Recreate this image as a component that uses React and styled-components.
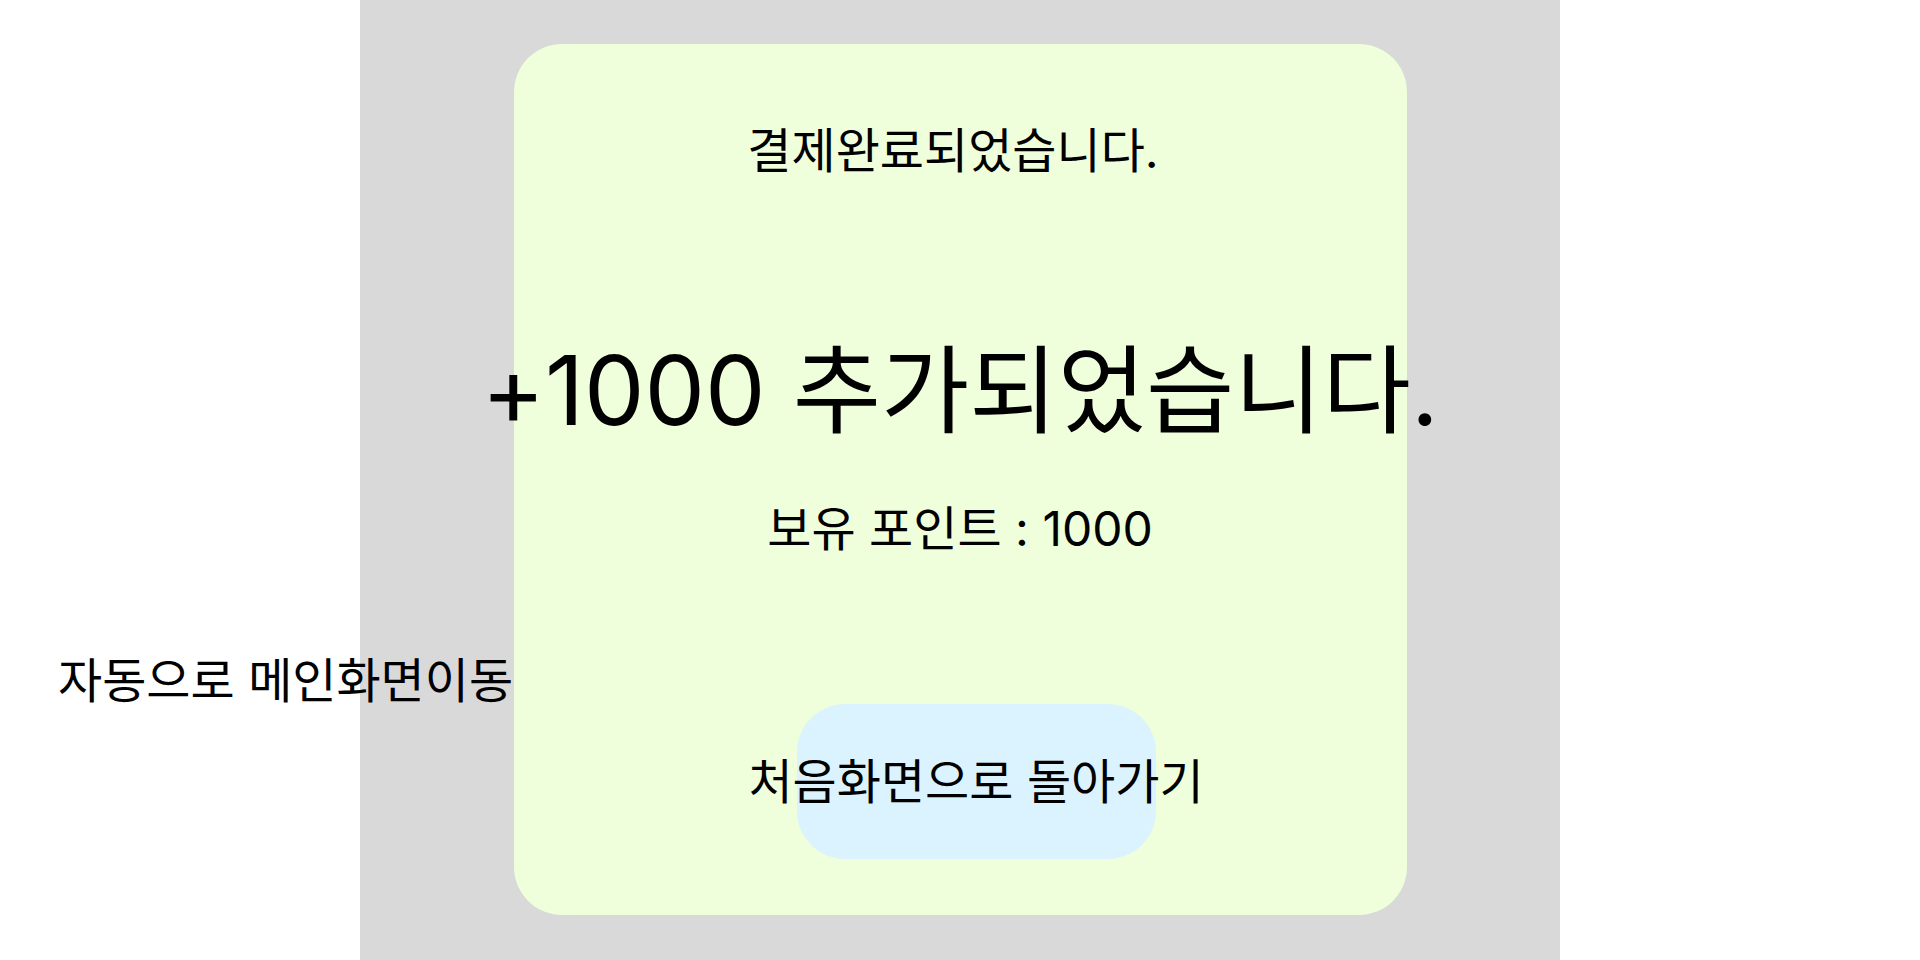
import React from 'react'
import styled, { createGlobalStyle } from 'styled-components'

const GlobalStyle = createGlobalStyle`
  html, body {
    margin: 0;
    padding: 0;
    background: #ffffff;
  }
  body {
    font-family: Inter, "Noto Sans CJK KR", sans-serif;
    color: #000000;
  }
`

const App = () => {
  return (
    <>
      <GlobalStyle />
      <Page>
        <SideNote>
          <AutoText>자동으로 메인화면이동</AutoText>
        </SideNote>
        <Stage>
          <Card>
            <Title>결제완료되었습니다.</Title>
            <BigText>+1000 추가되었습니다.</BigText>
            <Points>보유 포인트 : 1000</Points>
            <HomeButton>처음화면으로 돌아가기</HomeButton>
          </Card>
        </Stage>
        <div />
      </Page>
    </>
  )
}

export default App

const Page = styled.div`
  display: grid;
  grid-template-columns: minmax(0, 1fr) 1200px minmax(0, 1fr);
  height: 960px;
  width: 1920px;
  overflow: hidden;
`

const SideNote = styled.div`
  position: relative;
  z-index: 1;
  padding-top: 652px;
  padding-left: 58px;
  min-width: 0;
`

const AutoText = styled.p`
  margin: 0;
  font-size: 48px;
  line-height: 1.2;
  white-space: nowrap;
`

const Stage = styled.main`
  background: #d9d9d9;
  display: flex;
  justify-content: center;
  padding-top: 44px;
`

const Card = styled.section`
  width: 893px;
  height: 871px;
  flex-shrink: 0;
  box-sizing: border-box;
  background: #effedb;
  border-radius: 48px;
  display: flex;
  flex-direction: column;
  align-items: center;
  padding-top: 78px;
`

const Title = styled.h2`
  margin: 0 14px 0 0;
  font-size: 48px;
  font-weight: 400;
  line-height: 1.2;
  white-space: nowrap;
`

const BigText = styled.h1`
  margin: 153px 0 0;
  font-size: 96px;
  font-weight: 400;
  line-height: 1.2;
  white-space: nowrap;
`

const Points = styled.p`
  margin: 52px 0 0;
  font-size: 48px;
  line-height: 1.2;
  white-space: nowrap;
`

const HomeButton = styled.div`
  margin: 147px 0 0 32px;
  width: 359px;
  height: 155px;
  flex-shrink: 0;
  border-radius: 48px;
  background: #daf3ff;
  display: flex;
  align-items: center;
  justify-content: center;
  font-size: 48px;
  line-height: 1.2;
  white-space: nowrap;
  cursor: pointer;
`
